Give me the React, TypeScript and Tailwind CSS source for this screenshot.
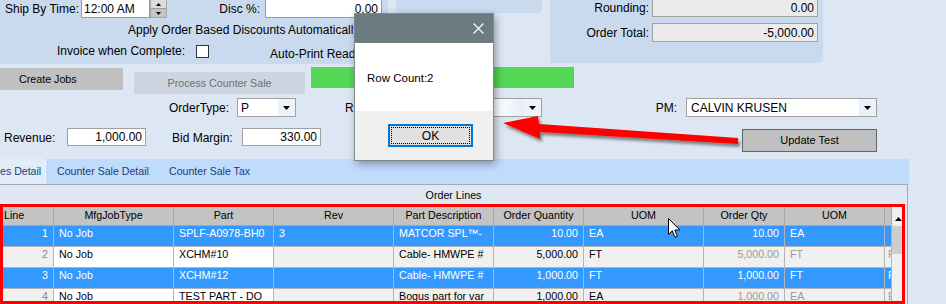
import React from "react";

const Tri = ({ up = false }: { up?: boolean }) => (
  <svg width="7" height="4" viewBox="0 0 7 4">
    <path d={up ? "M0 4H7L3.5 0Z" : "M0 0H7L3.5 4Z"} fill="#000" />
  </svg>
);

const SmallTri = ({ up = false }: { up?: boolean }) => (
  <svg width="5" height="3" viewBox="0 0 5 3">
    <path d={up ? "M0 3H5L2.5 0Z" : "M0 0H5L2.5 3Z"} fill="#000" />
  </svg>
);

type Col = { w: string; label: string; align: "l" | "r"; head: "l" | "c" };
const cols: Col[] = [
  { w: "w-[54px]", label: "Line", align: "r", head: "l" },
  { w: "w-[120px]", label: "MfgJobType", align: "l", head: "c" },
  { w: "w-[100px]", label: "Part", align: "l", head: "c" },
  { w: "w-[120px]", label: "Rev", align: "l", head: "c" },
  { w: "w-[100px]", label: "Part Description", align: "l", head: "c" },
  { w: "w-[90px]", label: "Order Quantity", align: "r", head: "c" },
  { w: "w-[120px]", label: "UOM", align: "l", head: "c" },
  { w: "w-[81px]", label: "Order Qty", align: "r", head: "c" },
  { w: "w-[100px]", label: "UOM", align: "l", head: "c" },
  { w: "w-[7px]", label: "", align: "l", head: "c" },
];

const rows = [
  { sel: true, cells: ["1", "No Job", "SPLF-A0978-BH0", "3", "MATCOR SPL™-", "10.00", "EA", "10.00", "EA", ""] },
  { sel: false, cells: ["2", "No Job", "XCHM#10", "", "Cable- HMWPE #", "5,000.00", "FT", "5,000.00", "FT", "FT"] },
  { sel: true, cells: ["3", "No Job", "XCHM#12", "", "Cable- HMWPE #", "1,000.00", "FT", "1,000.00", "FT", "FT"] },
  { sel: false, cells: ["4", "No Job", "TEST PART - DO", "", "Bogus part for var", "1,000.00", "EA", "1,000.00", "EA", "EA"] },
];

function cellBg(sel: boolean, i: number) {
  if (sel) return "bg-[#3399ff] text-white";
  const bg = i === 1 || i === 2 ? "bg-white" : "bg-[#f0f0f0]";
  const fg = i === 0 ? "text-[#8a8a8a]" : i >= 7 ? "text-[#9a9a9a]" : "text-black";
  return `${bg} ${fg}`;
}

export default function App() {
  return (
    <div className="relative w-[946px] h-[304px] overflow-hidden bg-[#dde7f3] text-[12px] text-black font-['Liberation_Sans',Arial,sans-serif]">
      {/* Top panels */}
      <div className="flex h-[64px]">
        <div className="w-[388px] h-[64px] bg-[#c9daef] overflow-hidden flex flex-col">
          <div className="flex items-center h-[19px] -mt-[1px] shrink-0">
            <span className="w-[81px] pl-[5px] whitespace-nowrap">Ship By Time:</span>
            <div className="w-[69px] h-[19px] bg-white border border-[#9c9c9c] flex items-center pl-[2px]">12:00 AM</div>
            <div className="w-[17px] h-[19px] flex flex-col border border-[#a8a8a8] bg-[#c8c8c8]">
              <div className="flex-1 bg-[#dcdcdc] flex items-center justify-center border-b border-[#9a9a9a]">
                <SmallTri up />
              </div>
              <div className="flex-1 bg-[#c4c4c4] flex items-center justify-center">
                <SmallTri />
              </div>
            </div>
            <span className="w-[98px] pr-[5px] text-right whitespace-nowrap">Disc %:</span>
            <div className="w-[117px] h-[19px] bg-white border border-[#9c9c9c] flex items-center justify-end pr-[3px]">0.00</div>
          </div>
          <div className="mt-[5px] h-[14px] leading-[14px] pl-[128px] whitespace-nowrap shrink-0">
            Apply Order Based Discounts Automatically
          </div>
          <div className="mt-[7px] flex items-start shrink-0">
            <span className="w-[196px] pl-[57px] h-[14px] leading-[14px] whitespace-nowrap">Invoice when Complete:</span>
            <div className="mt-[1px] w-[13px] h-[13px] bg-white border border-[#333]" />
            <span className="ml-[61px] mt-[3px] h-[14px] leading-[14px] whitespace-nowrap">Auto-Print Ready</span>
          </div>
        </div>
        <div className="ml-[8px] w-[146px] h-[13px] bg-[#c9daef] rounded-b-[4px]" />
        <div className="ml-[8px] w-[273px] h-[63px] bg-[#c9daef] rounded-br-[5px] flex flex-col">
          <div className="flex items-center h-[18px] -mt-[1px]">
            <span className="w-[102px] pr-[3px] text-right">Rounding:</span>
            <div className="w-[166px] h-[18px] bg-[#ebebeb] border border-[#a0a0a0] flex items-center justify-end pr-[3px]">0.00</div>
          </div>
          <div className="flex items-center h-[19px] mt-[6px]">
            <span className="w-[102px] pr-[3px] text-right">Order Total:</span>
            <div className="w-[166px] h-[19px] bg-[#ebebeb] border border-[#a0a0a0] flex items-center justify-end pr-[3px]">-5,000.00</div>
          </div>
        </div>
      </div>

      {/* Buttons row */}
      <div className="flex items-start h-[34px]">
        <div className="mt-[4px] w-[123px] h-[22px] bg-[#c0c0c0] pl-[19px] leading-[22px] text-[10.7px]">Create Jobs</div>
        <div className="ml-[11px] mt-[8px] w-[171px] h-[22px] bg-[#ccd5e0] text-[#6f6f6f] leading-[22px] text-center text-[10.7px]">
          Process Counter Sale
        </div>
        <div className="ml-[6px] mt-[3px] w-[263px] h-[21px] bg-[#55d855] border-r border-[#9a9a9a]" />
      </div>

      {/* OrderType row */}
      <div className="flex items-center h-[19px]">
        <span className="w-[237px] pr-[8px] text-right">OrderType:</span>
        <div className="w-[59px] h-[19px] bg-white border border-[#a0a0a0] flex items-center">
          <span className="flex-1 pl-[3px]">P</span>
          <div className="w-[17px] h-full bg-[#eef3fa] flex items-center justify-center">
            <Tri />
          </div>
        </div>
        <div className="w-[246px] flex items-center justify-between">
          <span className="pl-[49px]">Region:</span>
          <div className="w-[120px] h-[19px] bg-white border border-[#a0a0a0] flex items-center">
            <span className="flex-1 h-full bg-gradient-to-r from-white from-70% to-[#e8eef6]" />
            <div className="w-[17px] h-full bg-[#eef3fa] flex items-center justify-center">
              <Tri />
            </div>
          </div>
        </div>
        <span className="w-[144px] pr-[9px] text-right">PM:</span>
        <div className="w-[191px] h-[19px] bg-white border border-[#a0a0a0] flex items-center">
          <span className="flex-1 pl-[4px]">CALVIN KRUSEN</span>
          <div className="w-[17px] h-full bg-[#eaf1fb] flex items-center justify-center">
            <Tri />
          </div>
        </div>
      </div>

      {/* Revenue row */}
      <div className="mt-[10px] h-[25px] flex items-start">
        <span className="w-[67px] pl-[4px] mt-[2px] leading-[18px]">Revenue:</span>
        <div className="mt-[1px] w-[79px] h-[18px] bg-white border border-[#a0a0a0] flex items-center justify-end pr-[3px]">1,000.00</div>
        <span className="w-[96px] pl-[26px] mt-[2px] leading-[18px] whitespace-nowrap">Bid Margin:</span>
        <div className="mt-[1px] w-[79px] h-[18px] bg-white border border-[#a0a0a0] flex items-center justify-end pr-[3px]">330.00</div>
        <div className="ml-[421px] mt-[2px] w-[135px] h-[23px] bg-[#c0c0c0] border border-[#646464] flex items-center justify-center text-[11px]">
          Update Test
        </div>
      </div>

      {/* Tabs */}
      <div className="mt-[7px] w-[909px] h-[25px] bg-[#c0dbfb] flex text-[10.6px] text-[#1f3b78]">
        <div className="w-[46px] h-full bg-[#e2edfa] border-r border-[#eef4fc] flex items-center whitespace-nowrap">es Detail</div>
        <div className="w-[111px] h-full pl-[11px] flex items-center whitespace-nowrap">Counter Sale Detail</div>
        <div className="pl-[12px] h-full flex items-center whitespace-nowrap">Counter Sale Tax</div>
      </div>

      {/* Order lines panel */}
      <div className="w-[908px] border-t border-r border-[#a8a8a8] bg-[#dfe8f3]">
        <div className="h-[20px] flex items-center justify-center text-[10.7px]">Order Lines</div>
        <div className="flex text-[10.7px]">
          <div className="w-[892px]">
            <div className="flex h-[21px] bg-[#c3c3c3] border-b border-[#a5a5a5]">
              {cols.map((c, i) => (
                <div
                  key={i}
                  className={`${c.w} h-full border-r border-[#a8a8a8] flex items-center overflow-hidden whitespace-nowrap ${
                    c.head === "l" ? "pl-[4px]" : "justify-center"
                  }`}
                >
                  {c.label}
                </div>
              ))}
            </div>
            {rows.map((r, ri) => (
              <div key={ri} className="flex h-[21px] border-b border-[#b4b4b4]">
                {cols.map((c, i) => (
                  <div
                    key={i}
                    className={`${c.w} h-full border-r border-[#b4b4b4] flex items-start pt-[1px] leading-[13px] overflow-hidden whitespace-nowrap ${cellBg(
                      r.sel,
                      i
                    )} ${c.align === "r" ? "justify-end pr-[5px]" : i === 9 ? "pl-[3px]" : "pl-[5px]"}`}
                  >
                    {r.cells[i]}
                  </div>
                ))}
              </div>
            ))}
          </div>
          <div className="w-[13px] flex flex-col bg-[#f0f0f0]">
            <div className="h-[21px] flex items-center justify-center pt-[6px]">
              <Tri up />
            </div>
            <div className="h-[28px] bg-[#cdcdcd]" />
            <div className="flex-1" />
          </div>
        </div>
      </div>

      {/* Red annotation rectangle */}
      <div className="absolute left-0 top-[204px] w-[905px] h-[100px] border-[3px] border-[#ff0000] pointer-events-none" />

      {/* Dialog */}
      <div className="absolute left-[354px] top-[13px] w-[140px] h-[148px] border border-[#7f8a8c] bg-white shadow-[2px_3px_8px_rgba(0,0,0,0.35)] flex flex-col">
        <div className="h-[29px] bg-[#6b7b7f] flex items-center justify-end pr-[9px]">
          <svg width="11" height="11" viewBox="0 0 11 11">
            <path d="M0.5 0.5L10.5 10.5M10.5 0.5L0.5 10.5" stroke="#fff" strokeWidth="1.2" />
          </svg>
        </div>
        <div className="h-[68px] bg-white flex items-center pl-[12px] pt-[3px] text-[11.5px]">Row Count:2</div>
        <div className="flex-1 bg-[#f0f0f0] pt-[13px] pl-[33px]">
          <div className="relative w-[85px] h-[23px] border-2 border-[#0078d7] bg-[#e1e1e1] flex items-center justify-center text-[12px]">
            <div className="absolute inset-[1px] border border-dotted border-black" />
            OK
          </div>
        </div>
      </div>

      {/* Red arrow */}
      <svg className="absolute left-0 top-0 pointer-events-none" width="946" height="304" viewBox="0 0 946 304">
        <defs>
          <filter id="sh" x="-10%" y="-50%" width="120%" height="200%">
            <feDropShadow dx="2" dy="3" stdDeviation="1.5" floodColor="#000" floodOpacity="0.45" />
          </filter>
        </defs>
        <polygon
          points="503,123 538,116 539,124 738,138 738,144 540,132 540,139"
          fill="#ff0000"
          filter="url(#sh)"
        />
      </svg>

      {/* Mouse cursor */}
      <svg className="absolute left-[668px] top-[218px]" width="13" height="21" viewBox="0 0 13 21">
        <path
          d="M0.5 0.5 L0.5 16.5 L4.3 12.8 L7 19.3 L9.4 18.3 L6.8 12 L11.8 12 Z"
          fill="#fff"
          stroke="#000"
          strokeWidth="1"
          strokeLinejoin="miter"
        />
      </svg>
    </div>
  );
}
